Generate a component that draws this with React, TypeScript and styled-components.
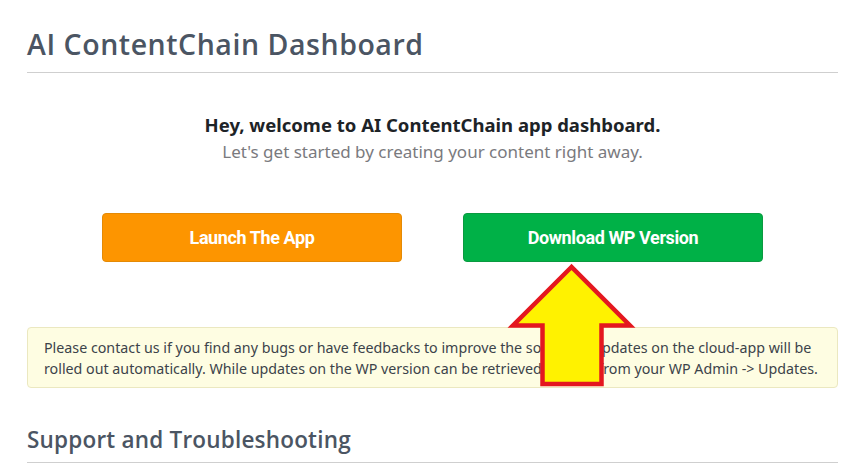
import React from "react";
import styled, { createGlobalStyle } from "styled-components";

const Global = createGlobalStyle`
  html, body { margin: 0; padding: 0; background: #ffffff; }
  body { font-family: "Open Sans", "Noto Sans", sans-serif; }
`;

const Page = styled.div`
  position: relative;
  width: 853px;
  height: 463px;
  overflow: hidden;
  padding: 0 15px 0 27px;
  box-sizing: border-box;
`;

const Title = styled.h1`
  margin: 0;
  padding-top: 27px;
  padding-bottom: 10px;
  font-family: "Open Sans", "Lato", sans-serif;
  font-weight: 600;
  font-size: 28.5px;
  line-height: 35px;
  letter-spacing: 0.55px;
  color: #4b5563;
  border-bottom: 1px solid #cfcfcf;
`;

const Welcome = styled.div`
  display: flex;
  flex-direction: column;
  align-items: center;
  padding-top: 39px;
  gap: 3px;
`;

const Lead = styled.p`
  margin: 0;
  font-family: "Noto Sans", "Open Sans", sans-serif;
  font-weight: 700;
  font-size: 18.5px;
  line-height: 25px;
  color: #1d2327;
`;

const Sub = styled.p`
  margin: 0;
  font-family: "Noto Sans", "Open Sans", sans-serif;
  font-size: 17px;
  line-height: 23px;
  color: #7a7a7e;
`;

const Buttons = styled.div`
  display: flex;
  justify-content: center;
  gap: 61px;
  margin-top: 50px;
`;

const Btn = styled.button<{ $bg: string; $border: string }>`
  width: 300px;
  height: 49px;
  border-radius: 4px;
  background: ${(p) => p.$bg};
  border: 1px solid ${(p) => p.$border};
  color: #ffffff;
  font-family: "Roboto", "Liberation Sans", sans-serif;
  font-weight: 700;
  font-size: 18px;
  letter-spacing: -0.4px;
  cursor: pointer;
`;

const Notice = styled.div`
  margin-top: 65px;
  background: #fefde2;
  border: 1px solid #ebe8c0;
  border-radius: 4px;
  padding: 9px 16px 8px;
  font-family: "Noto Sans", "Open Sans", sans-serif;
  font-size: 14.25px;
  line-height: 21px;
  color: #3c434a;
`;

const Section = styled.h2`
  margin: 0;
  margin-top: 37px;
  padding-bottom: 8px;
  font-family: "Open Sans", "Lato", sans-serif;
  font-weight: 600;
  font-size: 22.5px;
  line-height: 29px;
  letter-spacing: 0.2px;
  color: #4b5563;
  border-bottom: 1px solid #cfcfcf;
`;

const Arrow = styled.svg`
  position: absolute;
  left: 505px;
  top: 260px;
  width: 135px;
  height: 135px;
  pointer-events: none;
`;

export default function App() {
  return (
    <>
      <Global />
      <Page>
        <Title>AI ContentChain Dashboard</Title>
        <Welcome>
          <Lead>Hey, welcome to AI ContentChain app dashboard.</Lead>
          <Sub>Let's get started by creating your content right away.</Sub>
        </Welcome>
        <Buttons>
          <Btn $bg="#fd9500" $border="#e48a06">Launch The App</Btn>
          <Btn $bg="#00b147" $border="#0a9a40">Download WP Version</Btn>
        </Buttons>
        <Notice>
          Please contact us if you find any bugs or have feedbacks to improve the software. Updates on the cloud-app will be
          rolled out automatically. While updates on the WP version can be retrieved directly from your WP Admin -&gt; Updates.
        </Notice>
        <Section>Support and Troubleshooting</Section>
        <Arrow viewBox="505 260 135 135">
          <polygon
            points="571.5,267 513,325.5 542.5,325.5 542.5,384 601.5,384 601.5,325.5 630,325.5"
            fill="#fff200"
            stroke="#e4171f"
            strokeWidth="4.5"
            strokeLinejoin="miter"
          />
        </Arrow>
      </Page>
    </>
  );
}
